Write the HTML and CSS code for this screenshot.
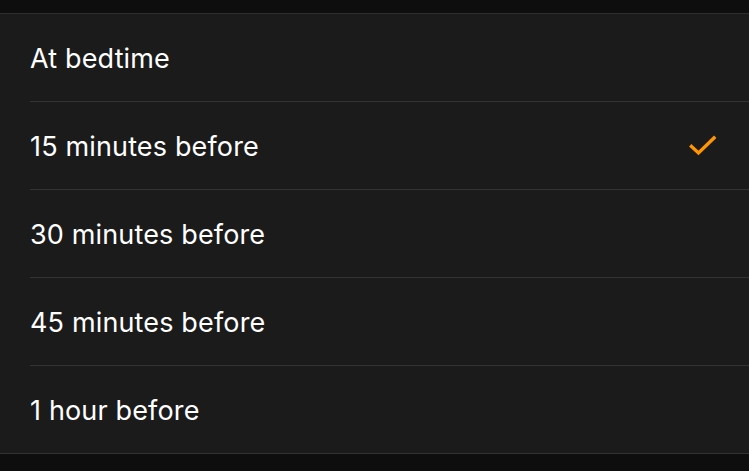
FILE: index.html
```html
<!DOCTYPE html>
<html>
<head>
<meta charset="utf-8">
<link rel="stylesheet" href="styles.css">
</head>
<body>
<div class="topband"></div>
<ul class="list">
  <li class="row"><span class="label">At bedtime</span></li>
  <li class="row"><span class="label">15 minutes before</span>
    <svg class="check" width="28" height="22" viewBox="0 0 28 22"><path d="M2.5 11.5 L9.5 18 L25 3" fill="none" stroke="#ff9500" stroke-width="3.4" stroke-linecap="square" stroke-linejoin="miter"/></svg>
  </li>
  <li class="row"><span class="label">30 minutes before</span></li>
  <li class="row"><span class="label">45 minutes before</span></li>
  <li class="row last"><span class="label">1 hour before</span></li>
</ul>
</body>
</html>
```
FILE: styles.css
```css
html, body {
  margin: 0;
  padding: 0;
  background: #0e0e0e;
  height: 100%;
  overflow: hidden;
}
.topband {
  height: 13px;
  background: #0e0e0e;
}
.list {
  list-style: none;
  margin: 0;
  padding: 0 0 0 30px;
  background: #1b1b1b;
  border-top: 1px solid #2e2e2e;
  border-bottom: 1px solid #333333;
}
.row {
  height: 87px;
  display: flex;
  align-items: center;
  justify-content: space-between;
  padding-right: 32px;
  border-bottom: 1px solid #333333;
  font-family: Inter, "Liberation Sans", sans-serif;
  font-size: 27px;
  color: #ffffff;
}
.row.last {
  border-bottom: none;
}
.label {
  letter-spacing: 0.15px;
  padding-top: 2px;
}
.check {
  display: block;
}
```
